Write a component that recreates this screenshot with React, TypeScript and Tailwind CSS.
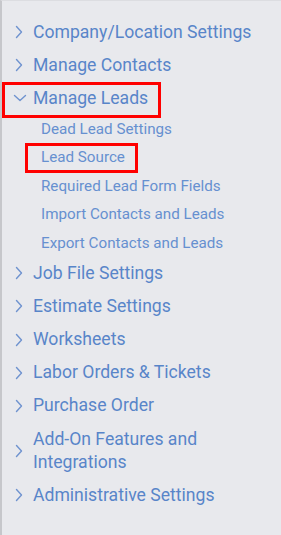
import React from "react";

const Right = () => (
  <svg width="8" height="14" viewBox="0 0 8 14" className="shrink-0">
    <path d="M1.5 1.5 L6.5 7 L1.5 12.5" fill="none" stroke="#6f93cf" strokeWidth="1.4" strokeLinecap="round" strokeLinejoin="round" />
  </svg>
);

const Down = () => (
  <svg width="14" height="8" viewBox="0 0 14 8" className="shrink-0">
    <path d="M1.5 1.5 L7 6.5 L12.5 1.5" fill="none" stroke="#6f93cf" strokeWidth="1.4" strokeLinecap="round" strokeLinejoin="round" />
  </svg>
);

const Main = ({ label, open = false, boxed = false }: { label: React.ReactNode; open?: boolean; boxed?: boolean }) => (
  <div className="relative flex items-center py-[5.1px] leading-[23px] text-[17.6px] text-[#5885c9]">
    <div className={open ? "w-[33px] pl-[13px] flex items-center" : "w-[33px] pl-[15px] flex items-center"}>
      {open ? <Down /> : <Right />}
    </div>
    <span>{label}</span>
    {boxed && (
      <span className="absolute left-[2px] w-[159px] top-[0.5px] bottom-[-2.5px] border-[3px] border-[#ff0000]" />
    )}
  </div>
);

const Sub = ({ label, boxed = false }: { label: string; boxed?: boolean }) => (
  <div className="relative flex items-center h-[28.5px] pl-[41px] text-[15.2px] text-[#6690d0]">
    <span>{label}</span>
    {boxed && (
      <span className="absolute left-[25px] w-[113px] top-[-0.5px] bottom-[-0.5px] border-[3px] border-[#ff0000]" />
    )}
  </div>
);

export default function App() {
  return (
    <div
      className="w-[281px] h-[535px] bg-[#e8e9ed] border-l-2 border-l-[#c6c7cb] border-t border-t-[#dcdde1] overflow-hidden"
      style={{ fontFamily: "Roboto, 'Noto Sans', sans-serif" }}
    >
      <div className="pt-[14.5px] -ml-[2px]">
        <Main label="Company/Location Settings" />
        <Main label="Manage Contacts" />
        <Main label="Manage Leads" open boxed />
        <div className="mb-[-1px]">
          <Sub label="Dead Lead Settings" />
          <Sub label="Lead Source" boxed />
          <Sub label="Required Lead Form Fields" />
          <Sub label="Import Contacts and Leads" />
          <Sub label="Export Contacts and Leads" />
        </div>
        <Main label="Job File Settings" />
        <Main label="Estimate Settings" />
        <Main label="Worksheets" />
        <Main label="Labor Orders & Tickets" />
        <Main label="Purchase Order" />
        <Main label={<>Add-On Features and<br />Integrations</>} />
        <Main label="Administrative Settings" />
      </div>
    </div>
  );
}
